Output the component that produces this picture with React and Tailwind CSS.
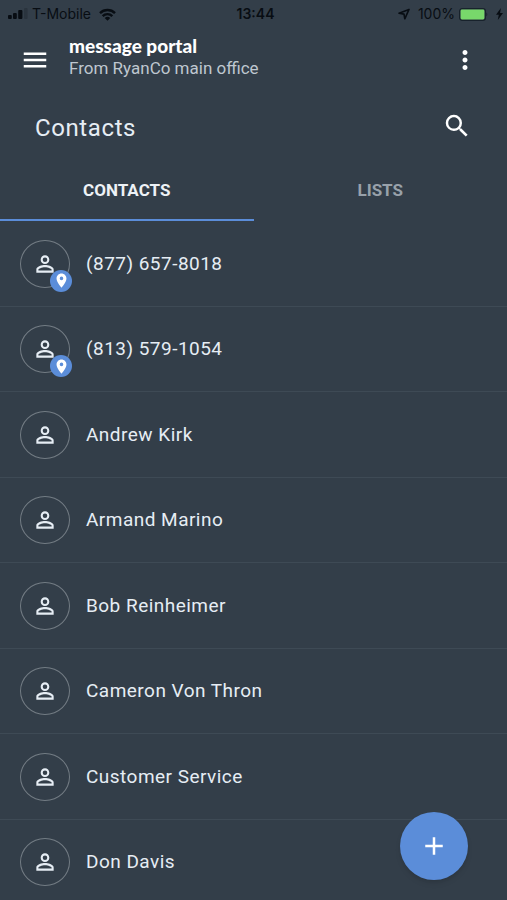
import React, { useState } from "react";
import {
  MdAdd,
  MdMenu,
  MdMoreVert,
  MdPersonOutline,
  MdPlace,
  MdSearch,
} from "react-icons/md";

const contacts = [
  { name: "(877) 657-8018", located: true },
  { name: "(813) 579-1054", located: true },
  { name: "Andrew Kirk" },
  { name: "Armand Marino" },
  { name: "Bob Reinheimer" },
  { name: "Cameron Von Thron" },
  { name: "Customer Service" },
  { name: "Don Davis" },
];

const SignalIcon = () => (
  <svg width="20" height="12" viewBox="0 0 20 12" fill="currentColor">
    <rect x="0" y="7" width="3.8" height="4" rx="1" />
    <rect x="5" y="5" width="3.8" height="6" rx="1" />
    <rect x="10.2" y="2" width="4.2" height="9" rx="1" />
    <rect x="16" y="0" width="3.6" height="11" rx="1" opacity="0.2" />
  </svg>
);

const WifiIcon = () => (
  <svg width="17" height="13" viewBox="0 0 17 13" fill="none" stroke="currentColor" strokeWidth="2.4">
    <path d="M1 5.1a10.6 10.6 0 0 1 15 0" />
    <path d="M3.7 8.1a6.8 6.8 0 0 1 9.6 0" />
    <path d="M8.5 12.8 5.7 10a4 4 0 0 1 5.6 0z" fill="currentColor" stroke="none" />
  </svg>
);

const ArrowIcon = () => (
  <svg width="12" height="12" viewBox="0 0 12 12" fill="none" stroke="currentColor" strokeWidth="1.6" strokeLinejoin="round">
    <path d="M11 1.4 1 5.3l5 .8.8 4.7z" />
  </svg>
);

const BatteryIcon = () => (
  <svg width="29" height="13" viewBox="0 0 29 13">
    <rect x="0.6" y="0.6" width="25.8" height="11.8" rx="2.6" fill="none" stroke="#18222c" strokeWidth="1.2" />
    <rect x="1.6" y="1.6" width="23.8" height="9.8" rx="1.4" fill="#78d86b" />
    <path d="M27.4 4.6c1.2.5 1.2 3.3 0 3.8z" fill="#18222c" />
  </svg>
);

const BoltIcon = () => (
  <svg width="7" height="12" viewBox="0 0 7 12" fill="currentColor">
    <path d="M4.9 0 0 6.8h2.8L1.8 12 7 4.9H4.1z" />
  </svg>
);

const StatusBar = () => (
  <div className="grid h-7 grid-cols-[1fr_auto_1fr] items-center pr-1 pl-2 font-[Inter,sans-serif] text-sm text-[#080d13]">
    <div className="flex items-center gap-1">
      <SignalIcon />
      <span>T-Mobile</span>
      <span className="pl-1">
        <WifiIcon />
      </span>
    </div>
    <span className="font-semibold">13:44</span>
    <div className="flex items-center justify-end gap-1">
      <ArrowIcon />
      <span className="pl-1">100%</span>
      <BatteryIcon />
      <span className="pl-1">
        <BoltIcon />
      </span>
    </div>
  </div>
);

const ContactRow = ({ name, located }) => (
  <li className="flex items-center gap-4 border-b border-[#3e4a55] px-5 pt-px">
    <div className="relative flex h-12 w-[50px] shrink-0 items-center justify-center rounded-[50%] border border-[#737c84]">
      <MdPersonOutline size={26} />
      {located && (
        <span className="absolute -right-[3px] -bottom-[5px] flex size-[22px] items-center justify-center rounded-full bg-[#5b8dd9] text-white">
          <MdPlace size={17} />
        </span>
      )}
    </div>
    <span className="text-[19px] tracking-wide">{name}</span>
  </li>
);

const App = () => {
  const [tab, setTab] = useState("contacts");

  const tabClass = (id) =>
    id === tab
      ? "border-b-2 border-[#5b8dd9] text-[#eef2f6]"
      : "border-b-2 border-transparent text-[#98a1aa]";

  return (
    <div className="relative flex h-screen flex-col overflow-hidden bg-[#333e49] font-[Roboto,sans-serif] text-[#e6edf4]">
      <StatusBar />

      <header className="flex h-16 shrink-0 items-center px-5">
        <button aria-label="Menu" className="text-white">
          <MdMenu size={30} />
        </button>
        <div className="flex-1 pb-1 pl-[19px]">
          <h1 className="font-[Lato,sans-serif] text-[19px] leading-5 font-black text-white">
            message portal
          </h1>
          <p className="text-[17px] leading-6 text-[#bfc7d0]">From RyanCo main office</p>
        </div>
        <button aria-label="More options" className="mr-[7px] text-white">
          <MdMoreVert size={30} />
        </button>
      </header>

      <div className="flex h-[70px] shrink-0 items-center justify-between px-[35px] pt-px">
        <h2 className="text-2xl tracking-wide">Contacts</h2>
        <button aria-label="Search" className="pb-1 text-white">
          <MdSearch size={30} />
        </button>
      </div>

      <div role="tablist" className="grid h-[59px] shrink-0 grid-cols-2 text-[17px] font-bold">
        <button
          role="tab"
          aria-selected={tab === "contacts"}
          onClick={() => setTab("contacts")}
          className={tabClass("contacts")}
        >
          CONTACTS
        </button>
        <button
          role="tab"
          aria-selected={tab === "lists"}
          onClick={() => setTab("lists")}
          className={tabClass("lists")}
        >
          LISTS
        </button>
      </div>

      <div className="flex-1 overflow-y-auto [scrollbar-width:none]">
        <ul className="grid min-h-[684px] auto-rows-fr">
          {contacts.map((c) => (
            <ContactRow key={c.name} name={c.name} located={c.located} />
          ))}
        </ul>
      </div>

      {/* Floating add button sits over the list */}
      <button
        aria-label="Add contact"
        className="absolute right-[39px] bottom-5 flex size-[68px] items-center justify-center rounded-full bg-[#5b8dd9] text-white shadow-md"
      >
        <MdAdd size={30} />
      </button>
    </div>
  );
};

export default App;
